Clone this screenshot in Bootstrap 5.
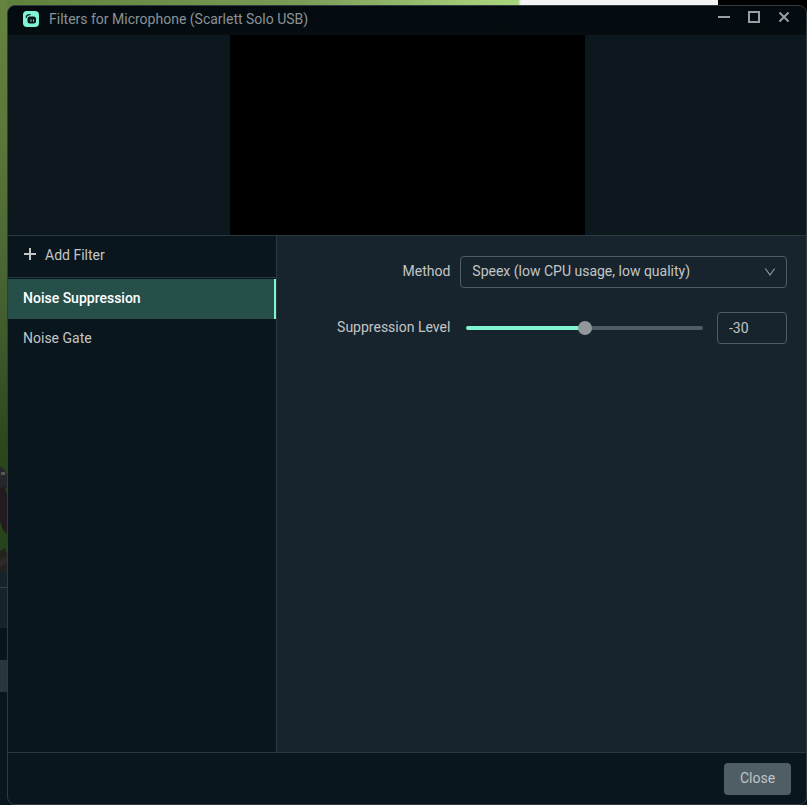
<!DOCTYPE html>
<html lang="en">
<head>
<meta charset="utf-8">
<meta name="viewport" content="width=device-width, initial-scale=1">
<title>Filters for Microphone (Scarlett Solo USB)</title>
<link href="https://cdn.jsdelivr.net/npm/bootstrap@5.3.0/dist/css/bootstrap.min.css" rel="stylesheet">
<style>
  :root { --teal: #80f5d2; --line: #2b383f; --panel: #17242d; --deep: #09161d; --ink: #c4c5c5; --edge: #4f5e65; }
  body { font-family: Roboto, "Liberation Sans", sans-serif; font-size: 14px; line-height: 20px; color: var(--ink); background: #09161d; }
  .desktop { padding: 5px 0 0 7px; overflow: hidden;
    background: linear-gradient(90deg, #5f7f3c 0, #7b9a57 300px, #a5cd78 480px, #a8d47a 518px, #f3f3f3 521px, #f3f3f3 718px, #000 718px) top / 100% 12px no-repeat, #09161d; }
  .scenery { position: absolute; left: 0; top: 0; }
  .app-window { border: 1px solid #2f3b40; border-radius: 8px; background: var(--deep); overflow: hidden; position: relative; }
  .title-bar { height: 29px; padding: 0 7px 3px 15px; background: linear-gradient(#030a10, #050d11); color: #8a9296; }
  .title-bar h1 { font-size: 14px; line-height: 20px; font-weight: 400; margin: 0 0 0 10px; }
  .win-btn { width: 30px; height: 24px; color: #9a9fa2; }
  .preview { height: 200px; background: #0d181e; }
  .preview-screen { width: 355px; height: 200px; background: #000; }
  .workspace { border-top: 1px solid var(--line); border-bottom: 1px solid var(--line); }
  .filters { width: 269px; border-right: 1px solid var(--line); }
  .add-filter { height: 42px; padding: 0 15px 3px; border-bottom: 1px solid var(--line); font-size: 14px; line-height: 20px; color: var(--ink); }
  .add-filter svg { margin-bottom: 2px; }
  .filter-list { padding-top: 1px; }
  .filter-item { height: 40px; padding: 0 15px 2px; color: var(--ink); text-decoration: none; }
  .filter-item.chosen { background: #274f4a; color: #fff; font-weight: 500; border-right: 2px solid var(--teal); }
  .settings { background: var(--panel); padding: 20px 19px 20px 20px; }
  .field-label { padding: 0 10px 2px 0; }
  .field { height: 32px; border: 1px solid var(--edge); border-radius: 4px; background: transparent; color: var(--ink); padding: 0 11px 2px; }
  select.field { appearance: none; }
  .field option { background: var(--panel); }
  .chevron { position: absolute; right: 11px; top: 11px; pointer-events: none; }
  .number-field { width: 70px; padding-bottom: 0; }
  .level { appearance: none; min-width: 0; height: 14px; margin: 0 14px 0 6px; background: transparent; }
  .level::-webkit-slider-runnable-track { height: 4px; border-radius: 2px; background: linear-gradient(90deg, var(--teal) 50%, #4f5e65 50%); }
  .level::-webkit-slider-thumb { appearance: none; width: 14px; height: 14px; margin-top: -5px; border-radius: 50%; background: #91979a; }
  .footer-bar { height: 51px; padding: 0 15px; }
  .close-btn { height: 32px; width: 67px; padding: 0 0 2px; border: 0; border-radius: 4px; background: #4f5e65; color: #bfc4c6; }
</style>
</head>
<body>
<div class="desktop min-vh-100 d-flex position-relative">
  <svg class="scenery" width="7" height="805" viewBox="0 0 7 805" aria-hidden="true">
    <defs><linearGradient id="grass" x1="0" y1="0" x2="0" y2="1">
      <stop offset="0" stop-color="#66833f"/><stop offset=".25" stop-color="#5a7639"/><stop offset=".5" stop-color="#486332"/><stop offset=".8" stop-color="#2b451c"/><stop offset="1" stop-color="#25421a"/>
    </linearGradient></defs>
    <rect width="7" height="571" fill="url(#grass)"/>
    <path d="M0 466l5 4 2 6v12l-7 4z" fill="#25282b"/><path d="M1 472h4v3H1z" fill="#555759"/>
    <path d="M0 489l4-3 3 8v40l-4-4-3-9z" fill="#211b20"/>
    <path d="M0 551l5-3 2 6v17H0z" fill="#23231e"/><path d="M0 560l7-3v6l-7 4z" fill="#30292b"/>
    <rect y="571" width="7" height="57" fill="#17232b"/><rect y="587" width="7" height="1" fill="#36424a"/>
    <rect y="628" width="7" height="32" fill="#08141b"/><rect y="660" width="7" height="32" fill="#29363c"/>
    <rect y="692" width="7" height="113" fill="#09161d"/>
  </svg>
  <main class="app-window flex-grow-1 d-flex flex-column">
    <header class="title-bar d-flex align-items-center flex-shrink-0">
      <svg width="16" height="16" viewBox="0 0 16 16" aria-hidden="true">
        <rect width="16" height="16" rx="4" fill="#80f5d2"/>
        <path d="M3.300 6.300C3.300 4.500 4.800 3.600 7 3.600" fill="none" stroke="#09161d" stroke-width="1.300" stroke-linecap="round"/>
        <rect x="4.500" y="5.500" width="8.500" height="7" rx="2.300" fill="#09161d"/>
        <path d="M8 8.500v2M10.500 8.500v2" stroke="#80f5d2" stroke-width="1"/>
      </svg>
      <h1 class="flex-grow-1 text-truncate">Filters for Microphone (Scarlett Solo USB)</h1>
      <button type="button" class="win-btn btn p-0 pb-1 border-0 d-flex align-items-center justify-content-center" aria-label="Minimize"><svg width="12" height="12" viewBox="0 0 12 12"><path d="M0 6h12" stroke="currentColor" stroke-width="2"/></svg></button>
      <button type="button" class="win-btn btn p-0 pb-1 border-0 d-flex align-items-center justify-content-center" aria-label="Maximize"><svg width="12" height="12" viewBox="0 0 12 12"><path d="M1 1h10v10H1z" fill="none" stroke="currentColor" stroke-width="2"/></svg></button>
      <button type="button" class="win-btn btn p-0 pb-1 border-0 d-flex align-items-center justify-content-center" aria-label="Close window"><svg width="12" height="12" viewBox="0 0 12 12"><path d="M1.500 1.500l9 9M10.500 1.500l-9 9" stroke="currentColor" stroke-width="2"/></svg></button>
    </header>
    <section class="preview d-flex justify-content-center flex-shrink-0" aria-label="Preview"><div class="preview-screen"></div></section>
    <section class="workspace d-flex flex-grow-1">
      <aside class="filters flex-shrink-0">
        <button type="button" class="add-filter btn w-100 rounded-0 border-top-0 border-start-0 border-end-0 d-flex align-items-center">
          <svg class="me-2" width="14" height="14" viewBox="0 0 14 14" aria-hidden="true"><path d="M7 1v12M1 7h12" stroke="currentColor" stroke-width="2"/></svg>Add Filter
        </button>
        <nav class="filter-list">
          <a href="#suppression" class="filter-item chosen d-flex align-items-center" aria-current="true">Noise Suppression</a>
          <a href="#gate" class="filter-item d-flex align-items-center">Noise Gate</a>
        </nav>
      </aside>
      <form class="settings flex-grow-1">
        <div class="row g-0 align-items-center mb-4">
          <label for="method" class="field-label col-4 text-end">Method</label>
          <div class="col-8 position-relative">
            <select id="method" class="field w-100"><option>Speex (low CPU usage, low quality)</option></select>
            <svg class="chevron" width="12" height="10" viewBox="0 0 12 10" aria-hidden="true"><path d="M1.300 1.500L6 8l4.700-6.500" fill="none" stroke="#949b9f" stroke-width="1.100"/></svg>
          </div>
        </div>
        <div class="row g-0 align-items-center">
          <label for="level" class="field-label col-4 text-end">Suppression Level</label>
          <div class="col-8 d-flex align-items-center">
            <input type="range" id="level" class="level flex-grow-1" min="-60" max="0" value="-30">
            <input type="text" class="field number-field" value="-30" aria-label="Suppression level value">
          </div>
        </div>
      </form>
    </section>
    <footer class="footer-bar d-flex align-items-center justify-content-end flex-shrink-0">
      <button type="button" class="close-btn">Close</button>
    </footer>
  </main>
</div>
<script src="https://cdn.jsdelivr.net/npm/bootstrap@5.3.0/dist/js/bootstrap.bundle.min.js"></script>
</body>
</html>
